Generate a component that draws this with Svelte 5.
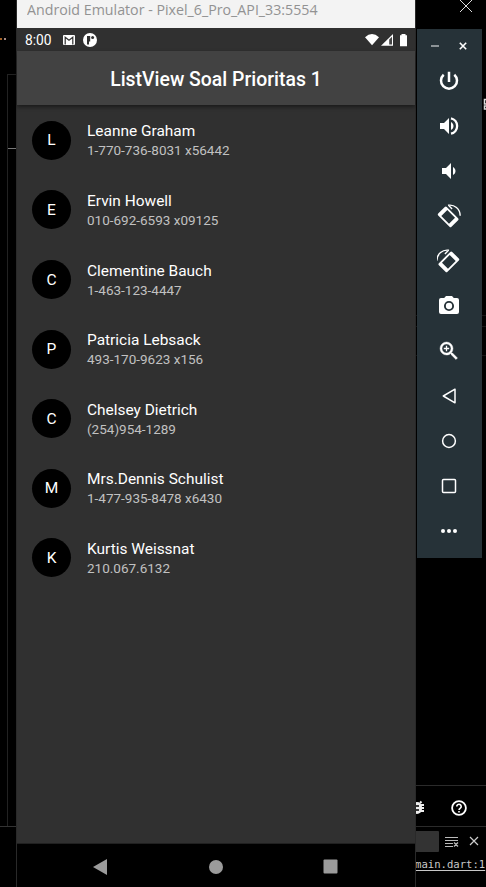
<script>
  const contacts = [
    ['Leanne Graham', '1-770-736-8031 x56442'],
    ['Ervin Howell', '010-692-6593 x09125'],
    ['Clementine Bauch', '1-463-123-4447'],
    ['Patricia Lebsack', '493-170-9623 x156'],
    ['Chelsey Dietrich', '(254)954-1289'],
    ['Mrs.Dennis Schulist', '1-477-935-8478 x6430'],
    ['Kurtis Weissnat', '210.067.6132']
  ];
  const tools = ['power', 'louder', 'quieter', 'right', 'left', 'camera', 'zoom', 'back', 'home', 'overview', 'more'];
</script>

{#snippet rotated()}
  <path d="M1.2 9.5 7.8 2.9Q8.8 1.9 9.8 2.9L21.1 14.2Q22.1 15.2 21.1 16.2L14.5 22.8Q13.5 23.8 12.5 22.8L1.2 11.5Q.2 10.5 1.2 9.5ZM4.3 12 12 19.7 18 13.7 10.3 6Z" fill-rule="evenodd" />
  <path d="M11 1.3C17.5 .2 23 5 23.2 11.7M11.5 1.3l3.6 3.6" fill="none" stroke="#fff" stroke-width="1.4" />
{/snippet}

<div class="desktop">
  <div class="ide">
    <span class="guide"></span><span class="tick"></span><span class="baseline"></span>
    <span class="crumb"><i></i><i></i></span>
    <svg class="close" viewBox="0 0 14 14"><path d="M1 0 13 12M13 0 1 12" stroke="#ddd" fill="none" /></svg>
    <svg class="sliver" viewBox="0 0 3 12"><path d="M3 1.5H1.5V6H3M3 8H1.5V11H3" fill="none" stroke="#ddd" stroke-width="1.5" /></svg>
    <div class="rules"><i></i><i></i><i></i></div>
    <div class="panel">
      <div class="debug">
        <svg class="bug" viewBox="0 0 18 18"><path d="M5 4 3.5 2.5M12 4l1.5-1.5M4 6H1M4 9H1M4 12H1M13 6h3M13 9h3M13 12h3" stroke="#eee" stroke-width="2" /><rect x="4" y="3" width="10" height="12" rx="5" fill="#eee" /><path d="M7 7h4M7 11h4" stroke="#000" stroke-width="1.5" /></svg>
        <svg class="help" viewBox="0 0 16 16"><circle cx="8" cy="8" r="6.9" fill="none" stroke="#fff" stroke-width="1.8" /><path d="M5.8 6.5a2.2 2.2 0 1 1 3.5 1.7C8.3 8.8 8 9.1 8 10" fill="none" stroke="#fff" stroke-width="1.6" /><path d="M7.2 11h1.6v1.5H7.2z" fill="#fff" /></svg>
      </div>
      <div class="filter">
        <span></span>
        <svg width="14" height="12" viewBox="0 0 14 12"><path d="M0 1.5h13M0 4.5h13M0 7.5h8M0 10.5h8M9 6.5l4 4M13 6.5l-4 4" stroke="#bbb" stroke-width="1.2" /></svg>
        <svg width="10" height="10" viewBox="0 0 10 10"><path d="m1 1 8 8M9 1 1 9" stroke="#ccc" stroke-width="1.2" /></svg>
      </div>
      <div class="link">main.dart:1</div>
    </div>
  </div>

  <main class="emulator">
    <div class="titlebar"><span>Android Emulator - Pixel_6_Pro_API_33:5554</span></div>
    <div class="status">
      <span class="time">8:00</span>
      <svg class="mail" width="12" height="10" viewBox="0 0 12 10"><rect width="12" height="10" rx="1" fill="#fff" /><path d="M2.2 9.5V2.2L6 5.3l3.8-3.1v7.3" fill="none" stroke="#303030" stroke-width="1.2" /></svg>
      <svg class="app" width="14" height="14" viewBox="0 0 14 14"><circle cx="7" cy="7" r="7" fill="#fff" /><path d="M4 3h3.2v5.4H6v3H4z" fill="#303030" /><circle cx="9.6" cy="4.5" r="1.5" fill="#303030" /></svg>
      <span class="grow"></span>
      <svg width="42" height="14" viewBox="0 0 42 14"><path d="M0 4.3Q7 -2.2 14 4.3L7 12.2Z" fill="#fff" /><path d="M16 12.7 28 1v11.7z" fill="#fff" /><path d="M24.2 6.4 27 3.7v7.7h-2.8z" fill="#444" /><path d="M35 2.2h1.5V1h4v1.2H42v11h-7z" fill="#fff" /></svg>
    </div>
    <header><h1>ListView Soal Prioritas 1</h1></header>
    <ul>
      {#each contacts as [name, phone]}
        <li>
          <span class="avatar">{name[0]}</span>
          <div><div class="name">{name}</div><div class="phone">{phone}</div></div>
        </li>
      {/each}
    </ul>
    <nav>
      <svg width="14" height="16" viewBox="0 0 14 16"><path d="M14 0v16L0 8z" /></svg>
      <svg width="14" height="14" viewBox="0 0 14 14"><circle cx="7" cy="7" r="7" /></svg>
      <svg width="15" height="15" viewBox="0 0 15 15"><rect x=".5" y=".5" width="14" height="14" rx="1" /></svg>
    </nav>
  </main>

  <aside>
    <div class="window-buttons">
      <svg width="8" height="8" viewBox="0 0 8 8"><path d="M0 4h8" stroke="#a7adb0" stroke-width="1.6" /></svg>
      <svg width="8" height="8" viewBox="0 0 8 8"><path d="m.8.8 6.4 6.4M7.2.8.8 7.2" stroke="#fff" stroke-width="1.6" /></svg>
    </div>
    {#each tools as tool}
      <div class="tool">
        <svg width="24" height="24" viewBox="0 0 24 24" fill="#fff">
          {#if tool === 'power'}
            <path d="M12 2.8V13M6.7 5.7a8 8 0 1 0 10.6 0" fill="none" stroke="#fff" stroke-width="2.5" />
          {:else if tool === 'louder'}
            <path d="M3 9v6h4l5 5V4L7 9H3zm13.5 3c0-1.77-1.02-3.29-2.5-4.03v8.05c1.48-.73 2.5-2.25 2.5-4.02z" /><path d="M14 4.3a7.9 7.9 0 0 1 0 15.4" fill="none" stroke="#fff" stroke-width="2.3" />
          {:else if tool === 'quieter'}
            <path d="M18.5 12c0-1.77-1.02-3.29-2.5-4.03v8.05c1.48-.73 2.5-2.25 2.5-4.02zM5 9v6h4l5 5V4L9 9H5z" />
          {:else if tool === 'right'}
            {@render rotated()}
          {:else if tool === 'left'}
            <g transform="translate(23 0) scale(-1 1)">{@render rotated()}</g>
          {:else if tool === 'camera'}
            <path d="M9 2 7.2 4H4a2 2 0 0 0-2 2v12a2 2 0 0 0 2 2h16a2 2 0 0 0 2-2V6a2 2 0 0 0-2-2h-3.2L15 2z" /><circle cx="12" cy="12" r="4.1" fill="#fff" stroke="#263238" stroke-width="1.9" />
          {:else if tool === 'zoom'}
            <path d="M15.5 14h-.79l-.28-.27A6.47 6.47 0 0 0 16 9.5 6.5 6.5 0 1 0 9.5 16c1.61 0 3.09-.59 4.23-1.57l.27.28v.79l5 4.99L20.49 19l-4.99-5zm-6 0a4.5 4.5 0 1 1 0-9 4.5 4.5 0 0 1 0 9z" stroke="#fff" stroke-width=".4" /><path d="M9.5 6.8v5.4M6.8 9.5h5.4" stroke="#fff" stroke-width="1.3" />
          {:else if tool === 'back'}
            <path d="M18 5.2v13.6L6.3 12z" fill="none" stroke="#fff" stroke-width="1.5" stroke-linejoin="round" />
          {:else if tool === 'home'}
            <circle cx="12" cy="12" r="6.4" fill="none" stroke="#fff" stroke-width="1.5" />
          {:else if tool === 'overview'}
            <rect x="5.5" y="5.5" width="13" height="13" rx="1" fill="none" stroke="#fff" stroke-width="1.5" />
          {:else}
            <circle cx="6" cy="12" r="2" /><circle cx="12" cy="12" r="2" /><circle cx="18" cy="12" r="2" />
          {/if}
        </svg>
      </div>
    {/each}
  </aside>
</div>

<style>
  :global(body) { margin: 0; background: #000; }
  .desktop { position: relative; width: 486px; height: 887px; overflow: hidden; background: #000; font-family: Roboto, sans-serif; }
  svg { display: block; flex: none; }
  .ide { position: absolute; inset: 0; }
  .guide { position: absolute; left: 7px; top: 74px; width: 9px; height: 751px; border: solid #222; border-width: 1px 0 0 1px; }
  .tick { position: absolute; left: 8px; top: 148px; width: 9px; height: 1px; background: #777; }
  .baseline { position: absolute; left: 0; top: 826px; width: 17px; height: 1px; background: #333; }
  .crumb { position: absolute; left: 0; top: 38px; display: flex; gap: 2px; }
  .crumb i { width: 2px; height: 2px; background: #a66224; }
  .crumb i:last-child { background: #a78b86; }
  .close { position: absolute; left: 459px; top: 0; width: 14px; height: 14px; }
  .sliver { position: absolute; left: 483px; top: 98px; width: 3px; height: 12px; }
  .rules { position: absolute; left: 416px; top: 315px; width: 70px; display: flex; flex-direction: column; gap: 10px; }
  .rules i { height: 1px; background: #171717; }
  .rules i:last-child { margin-top: 18px; }
  .panel { position: absolute; left: 415px; top: 785px; width: 71px; height: 102px; border-top: 1px solid #2b2b2b; }
  .debug { display: flex; height: 40px; align-items: center; border-bottom: 1px solid #2b2b2b; gap: 25px; }
  .bug { width: 18px; height: 18px; margin-left: -7px; margin-top: 3px; }
  .help { width: 16px; height: 16px; margin-top: 3px; }
  .filter { display: flex; align-items: center; height: 29px; }
  .filter span { width: 24px; height: 21px; background: #333; border-radius: 0 1px 1px 0; margin-right: 6px; }
  .filter svg:last-child { margin-left: 10px; margin-top: -2px; }
  .link { font: 10.6px/17px "DejaVu Sans Mono", monospace; color: #c8c8c8; text-decoration: underline; text-underline-offset: 2px; white-space: nowrap; }
  .emulator { position: absolute; left: 16px; top: 0; width: 398px; height: 887px; border: solid #292929; border-width: 0 1px; background: #303030; display: flex; flex-direction: column; color: #fff; }
  .titlebar { height: 28px; flex: none; background: #f3f3f3; color: #929292; box-sizing: border-box; padding: 0 10px; font: 15px/18px "Open Sans", sans-serif; white-space: nowrap; }
  .titlebar span { display: inline-block; transform: scaleX(.948); transform-origin: left; }
  .status { height: 23px; flex: none; display: flex; align-items: center; background: #303030; padding: 0 8px; }
  .time { width: 38px; font-size: 13.8px; padding-top: 1px; }
  .app { margin-left: 8px; }
  .grow { flex: 1; }
  header { position: relative; height: 54px; flex: none; display: flex; align-items: center; justify-content: center; background: #424242; box-shadow: 0 2px 4px #0007; }
  h1 { margin: 4px 0 0; font-size: 19.4px; font-weight: 500; line-height: 24px; white-space: nowrap; }
  ul { list-style: none; padding: .6px 0 0; margin: 0; flex: 1; }
  li { height: 69.6px; display: flex; align-items: center; padding-left: 15px; }
  .avatar { width: 39px; height: 39px; border-radius: 50%; background: #000; display: flex; align-items: center; justify-content: center; font-size: 15.5px; margin-right: 16px; }
  .name { font-size: 15.45px; line-height: 20px; white-space: nowrap; }
  .phone { font-size: 13.5px; line-height: 18px; color: #c1c1c1; white-space: nowrap; }
  nav { height: 43px; flex: none; background: #000; border-top: 1px solid #202020; display: flex; align-items: center; padding-left: 76px; gap: 101.5px; }
  nav svg { fill: #9b9b9b; margin-top: 3px; }
  nav svg:nth-child(2) { margin-left: .5px; margin-top: 2px; }
  nav svg:nth-child(3) { margin-left: -2px; margin-top: 2px; }
  aside { position: absolute; left: 417px; top: 29px; width: 65px; height: 529px; background: #263238; display: flex; flex-direction: column; }
  .window-buttons { height: 29.5px; display: flex; justify-content: center; align-items: center; gap: 20px; box-sizing: border-box; padding: 5px 2px 0 0; }
  .tool { height: 45px; flex: none; display: flex; align-items: center; padding-left: 20px; }
</style>
